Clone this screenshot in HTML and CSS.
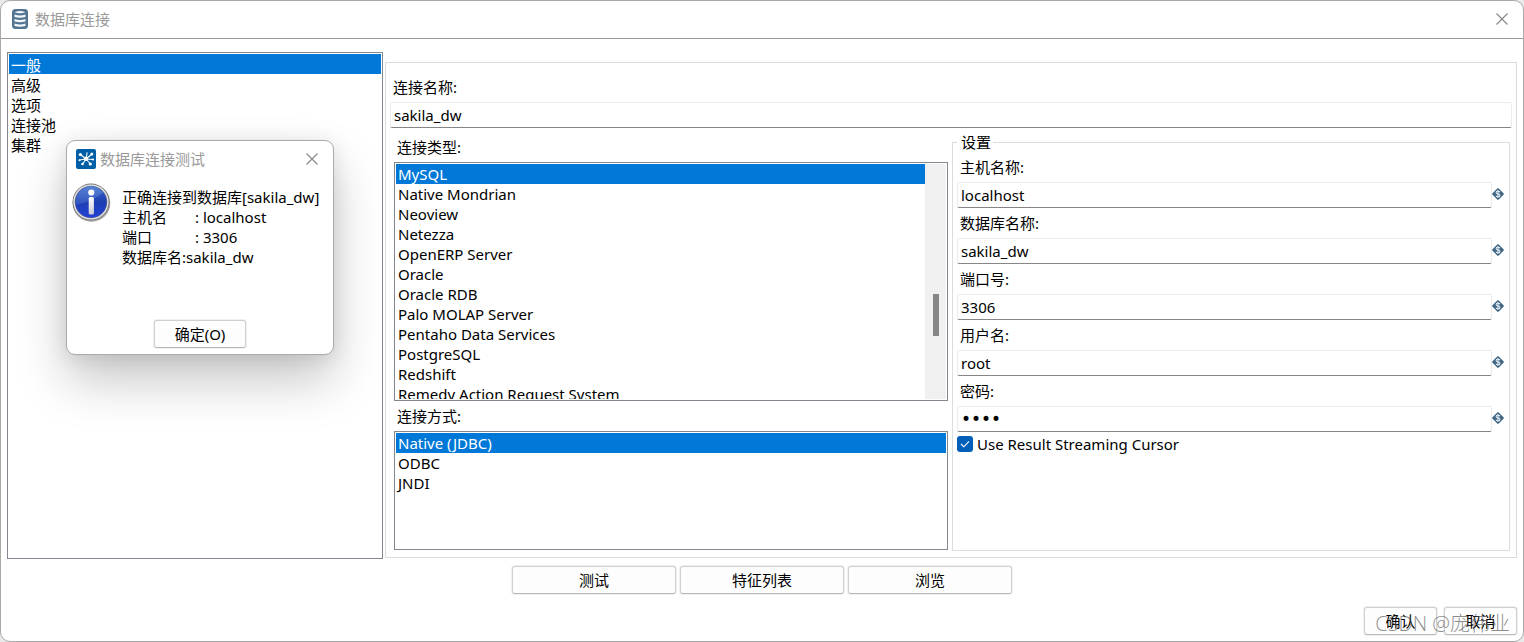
FILE: index.html
```html
<!DOCTYPE html>
<html lang="zh-CN">
<head>
<meta charset="utf-8">
<title>数据库连接</title>
<link rel="stylesheet" href="styles.css">
</head>
<body>
<svg class="defs" aria-hidden="true">
  <symbol id="close" viewBox="0 0 12 12"><path d="M0.5 0.5 11.5 11.5M11.5 0.5 0.5 11.5" fill="none" stroke="currentColor" stroke-width="1.1"/></symbol>
  <symbol id="variable" viewBox="0 0 12 12"><path d="M5.2.5Q6-.1 6.800.5L11.500 5.200Q12.100 6 11.500 6.800L6.800 11.500Q6 12.100 5.200 11.500L.5 6.800Q-.1 6 .5 5.200Z" fill="#3f6584"/><path d="M8 4.200Q7.500 3 6 3 4.100 3 4.100 4.400 4.100 5.600 6 5.900 8 6.300 8 7.500 8 8.900 6 8.900 4.400 8.900 3.900 7.800M6 2V10" fill="none" stroke="#dfeaf2" stroke-width="1.100"/></symbol>
</svg>
<main class="window">
  <header class="titlebar">
    <svg class="db-icon" viewBox="0 0 16 20" aria-hidden="true">
      <rect width="16" height="20" rx="3.500" fill="#537491"/>
      <path d="M2.500 3.200Q8 .9 13.500 3.200 8 5.200 2.500 3.200ZM2.500 5.500Q8 7.300 13.500 5.500V8Q8 9.600 2.500 8ZM2.500 10Q8 11.800 13.500 10V12.500Q8 14.100 2.500 12.500ZM2.500 14.500Q8 16.300 13.500 14.500V17Q8 18.600 2.500 17Z" fill="#f3f7fa"/>
    </svg>
    <h1 class="title">数据库连接</h1>
    <button class="close" type="button" aria-label="关闭"><svg><use href="#close"/></svg></button>
  </header>

  <div class="content">
    <select class="list" size="5" aria-label="类别">
      <option selected>一般</option><option>高级</option><option>选项</option><option>连接池</option><option>集群</option>
    </select>
    <section class="panel">
      <div class="field name-field">
        <label for="name">连接名称:</label>
        <input class="text" id="name" type="text" value="sakila_dw">
      </div>
      <div class="columns">
        <div class="choices">
          <label for="type">连接类型:</label>
          <div class="scroll-list">
            <select class="list" id="type" size="12">
              <option selected>MySQL</option><option>Native Mondrian</option><option>Neoview</option><option>Netezza</option><option>OpenERP Server</option><option>Oracle</option><option>Oracle RDB</option><option>Palo MOLAP Server</option><option>Pentaho Data Services</option><option>PostgreSQL</option><option>Redshift</option><option>Remedy Action Request System</option>
            </select>
            <div class="track"><div class="thumb"></div></div>
          </div>
          <label for="access" class="access-label">连接方式:</label>
          <select class="list access" id="access" size="3">
            <option selected>Native (JDBC)</option><option>ODBC</option><option>JNDI</option>
          </select>
        </div>
        <fieldset class="settings">
          <legend>设置</legend>
          <div class="fields">
            <div class="field"><label for="host">主机名称:</label><div class="entry"><input class="text" id="host" type="text" value="localhost"><svg class="var"><use href="#variable"/></svg></div></div>
            <div class="field"><label for="database">数据库名称:</label><div class="entry"><input class="text" id="database" type="text" value="sakila_dw"><svg class="var"><use href="#variable"/></svg></div></div>
            <div class="field"><label for="port">端口号:</label><div class="entry"><input class="text" id="port" type="text" value="3306"><svg class="var"><use href="#variable"/></svg></div></div>
            <div class="field"><label for="user">用户名:</label><div class="entry"><input class="text" id="user" type="text" value="root"><svg class="var"><use href="#variable"/></svg></div></div>
            <div class="field"><label for="password">密码:</label><div class="entry"><input class="text secret" id="password" type="password" value="root"><svg class="var"><use href="#variable"/></svg></div></div>
          </div>
          <div class="check">
            <span class="box"><input type="checkbox" id="cursor" checked><svg class="tick" viewBox="0 0 16 16"><path d="M4 8 6.800 10.800 12 5.300" fill="none" stroke="#fff" stroke-width="1.1"/></svg></span>
            <label for="cursor">Use Result Streaming Cursor</label>
          </div>
        </fieldset>
      </div>
    </section>
  </div>

  <div class="actions">
    <button class="btn wide" type="button">测试</button>
    <button class="btn wide" type="button">特征列表</button>
    <button class="btn wide" type="button">浏览</button>
  </div>
  <footer class="footer">
    <button class="btn small" type="button">确认</button>
    <button class="btn small" type="button">取消</button>
    <span class="watermark">CSDN @庞伟业</span>
  </footer>
</main>

<section class="dialog" role="dialog" aria-labelledby="dialog-title">
  <header class="dialog-bar">
    <svg class="app-icon" viewBox="0 0 20 20" aria-hidden="true">
      <rect width="20" height="20" rx="2" fill="#005ea6"/>
      <path d="M10 10 4.500 5.500M10 10 3.500 11M10 10 7 14.500M10 10 14.500 15M10 10 17 10.500M10 10 15.500 5.500M10 10 11 4.500" stroke="#fff" stroke-width="1.100"/>
      <g fill="#fff"><circle cx="10" cy="9.800" r="2.200"/><circle cx="4.300" cy="5.500" r="1.600"/><circle cx="3.500" cy="11.300" r="1"/><circle cx="6.500" cy="15" r="1.300"/><circle cx="14.300" cy="15" r="1.600"/><circle cx="17" cy="10.500" r="1.100"/><circle cx="15.800" cy="5" r="1.500"/><circle cx="11" cy="4" r=".7"/></g>
    </svg>
    <h2 class="title" id="dialog-title">数据库连接测试</h2>
    <button class="close" type="button" aria-label="关闭"><svg><use href="#close"/></svg></button>
  </header>
  <div class="message">
    <svg class="info" viewBox="0 0 39 39" aria-hidden="true">
      <defs>
        <linearGradient id="ball" x2="0" y2="1"><stop stop-color="#3568c8"/><stop offset=".5" stop-color="#1d3db0"/><stop offset="1" stop-color="#2342d8"/></linearGradient>
        <linearGradient id="gloss" x2="0" y2="1"><stop stop-color="#6b95de"/><stop offset="1" stop-color="#3d63c6"/></linearGradient>
        <linearGradient id="stem" x2="0" y2="1"><stop stop-color="#fff"/><stop offset="1" stop-color="#c9c9d6"/></linearGradient>
      </defs>
      <circle cx="19.500" cy="20" r="18.800" fill="#a2a2a2"/>
      <circle cx="19" cy="19" r="18.500" fill="#777"/>
      <circle cx="19" cy="19" r="17.600" fill="#e7e7e7"/>
      <circle cx="19" cy="19" r="16.300" fill="#777c92"/>
      <circle cx="19" cy="19" r="15.700" fill="url(#ball)"/>
      <path d="M4 18A15 15 0 0 1 31 9.500Q22 18 4 22Z" fill="url(#gloss)" opacity=".6"/>
      <circle cx="19.300" cy="9.500" r="3.100" fill="#fff"/>
      <rect x="16.700" y="14" width="5.200" height="17.500" rx="1.500" fill="url(#stem)"/>
    </svg>
    <div class="lines">
      <p>正确连接到数据库[sakila_dw]</p>
      <p><span class="key">主机名</span>: localhost</p>
      <p><span class="key">端口</span>: 3306</p>
      <p>数据库名:sakila_dw</p>
    </div>
  </div>
  <button class="btn ok" type="button">确定(O)</button>
</section>
</body>
</html>
```

FILE: styles.css
```css
* { box-sizing: border-box; }

body, button, input, select {
  font-family: "Noto Sans", "Noto Sans CJK SC", sans-serif;
  font-size: 15px;
  line-height: 20px;
  color: #000;
}
body { margin: 0; background: #e9e9e9; }
h1, h2, p { margin: 0; }
.defs { position: absolute; width: 0; height: 0; }

.window {
  display: flex;
  flex-direction: column;
  min-height: 100vh;
  background: #fff;
  border: 1px solid #aaa;
  border-radius: 10px;
}
.titlebar {
  display: flex;
  align-items: center;
  gap: 7px;
  height: 38px;
  padding: 0 15px 2px 11px;
  border-bottom: 1px solid #999;
}
.title { flex: 1; font-size: 15px; font-weight: 400; color: #999; }
.db-icon { width: 16px; height: 20px; }
.close {
  display: flex;
  padding: 0;
  border: 0;
  background: none;
  color: #868686;
}
.close svg { width: 12px; height: 12px; }

.content {
  flex: 1;
  display: grid;
  grid-template-columns: 376fr 1132fr;
  gap: 2px;
  padding: 13px 6px 0;
}
.list {
  display: block;
  width: 100%;
  padding: 1px;
  overflow: hidden;
  background: #fff;
  border: 1px solid #828790;
  border-radius: 0;
  outline: 0;
}
.list option { height: 20px; min-height: 20px; padding: 0 2px; line-height: 18px; color: #000; }
.list option:checked { color: #fff; background: #0078d7 linear-gradient(#0078d7, #0078d7); }

.panel {
  display: flex;
  flex-direction: column;
  margin: 10px 0 1px;
  padding: 14px 4px 6px;
  border: 1px solid #dcdcdc;
}
label { display: block; padding-left: 2px; }
.field { display: flex; flex-direction: column; gap: 5px; }
.name-field > label { padding-left: 3px; }
.text {
  width: 100%;
  min-width: 0;
  height: 26px;
  padding: 0 3px;
  background: #fff;
  border: 1px solid #ebebeb;
  border-bottom-color: #868686;
  border-radius: 2px;
  outline: 0;
}
.secret { font-family: "DejaVu Sans", sans-serif; font-size: 17px; }
.columns {
  flex: 1;
  display: grid;
  grid-template-columns: 554fr 558fr;
  gap: 4px;
  margin-top: 4px;
  padding: 0 2px 0 4px;
}
.choices { display: flex; flex-direction: column; padding: 5px 0 1px; }
.choices label { padding-left: 3px; }
.scroll-list {
  display: flex;
  height: 239px;
  margin-top: 5px;
  padding: 1px;
  border: 1px solid #828790;
}
.scroll-list .list { flex: 1; height: 235px; padding: 0; border: 0; }
.track { width: 21px; padding: 130px 7px 0 8px; background: #f0f0f0; }
.thumb { height: 42px; background: #858585; }
.access-label { margin-top: 5px; }
.access { flex: 1; margin-top: 5px; }

.settings { min-width: 0; margin: 0; padding: 5px 5px 4px 4px; border: 1px solid #dcdcdc; }
.settings legend { padding: 0 2px 0 4px; }
.settings label { padding-left: 3px; }
.fields { display: grid; gap: 5px; }
.entry { display: flex; }
.var { flex: none; width: 12px; height: 12px; margin-top: 6px; }
.check { display: flex; align-items: center; gap: 1px; margin-top: 2px; }
.box { position: relative; display: flex; }
.box input {
  appearance: none;
  width: 16px;
  height: 16px;
  margin: 0;
  background: #005fb8;
  border-radius: 3px;
}
.tick { position: absolute; inset: 0; width: 16px; height: 16px; pointer-events: none; }

.btn {
  height: 28px;
  padding: 0;
  background: #fdfdfd;
  border: 1px solid #d0d0d0;
  border-bottom-color: #b9b9b9;
  border-radius: 3px;
  box-shadow: 0 0 0 1px #f0f0f0;
}
.actions { display: flex; justify-content: center; gap: 4px; margin-top: 7px; }
.wide { width: 164px; }
.footer {
  position: relative;
  display: flex;
  justify-content: flex-end;
  gap: 7px;
  padding: 13px 6px 6px;
}
.small { width: 73px; }
.watermark {
  position: absolute;
  right: 13px;
  bottom: 3px;
  font-family: "Open Sans", "Noto Sans CJK SC", sans-serif;
  font-size: 20px;
  font-weight: 300;
  line-height: 28px;
  color: rgba(90, 90, 90, .7);
  pointer-events: none;
}

.dialog {
  position: absolute;
  left: 66px;
  top: 140px;
  display: flex;
  flex-direction: column;
  width: 268px;
  background: #fff;
  border: 1px solid #aaa;
  border-radius: 9px;
  box-shadow: 0 26px 50px rgba(0, 0, 0, .22), 0 2px 20px rgba(0, 0, 0, .1);
}
.dialog-bar { display: flex; align-items: center; gap: 4px; height: 36px; padding: 0 15px 0 9px; }
.app-icon { width: 20px; height: 20px; }
.message { display: flex; gap: 11px; padding: 6px 0 0 5px; }
.info { flex: none; width: 39px; height: 39px; }
.lines { padding-top: 4px; white-space: nowrap; }
.key { display: inline-block; width: 73px; }
.ok { align-self: center; width: 92px; margin: 53px 0 6px; }
```
